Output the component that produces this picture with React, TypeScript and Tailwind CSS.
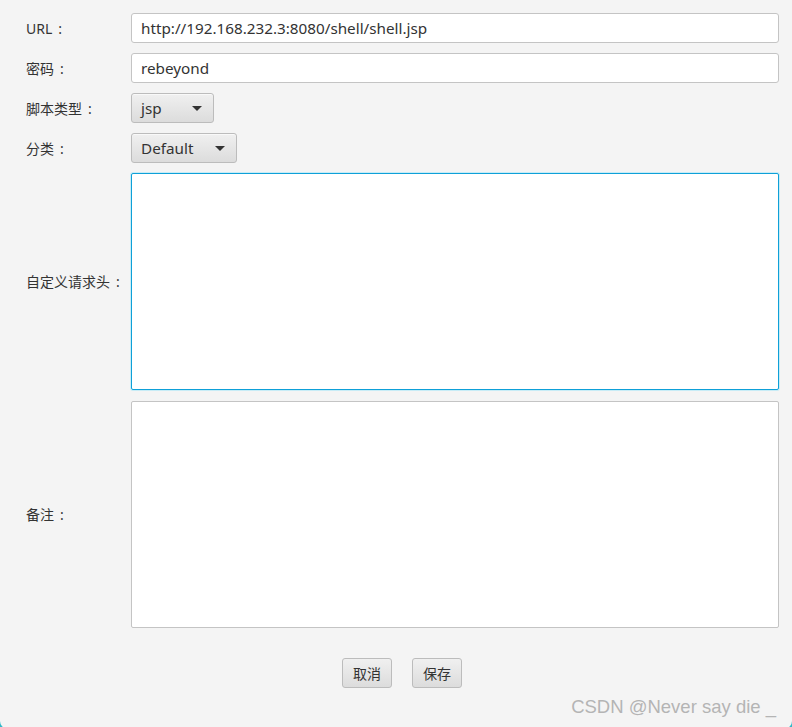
import React from "react";

const font = { fontFamily: '"Microsoft YaHei", "Noto Sans", "Noto Sans CJK SC", sans-serif' };

function Arrow() {
  return (
    <svg width="10" height="5" viewBox="0 0 10 5" className="shrink-0">
      <path d="M0 0 L10 0 L5 5 Z" fill="#333333" />
    </svg>
  );
}

function Combo({ label, width }: { label: string; width: string }) {
  return (
    <div
      className={`flex h-[30px] ${width} items-center justify-between rounded-[3px] border border-[#bcbcbc] bg-gradient-to-b from-[#f0f0f0] to-[#dcdcdc] pl-[9px] pr-[11px] text-[15.25px] text-[#333333] shadow-[0_1px_0_rgba(255,255,255,0.6)_inset]`}
    >
      <span>{label}</span>
      <Arrow />
    </div>
  );
}

function Label({ text }: { text: string }) {
  return (
    <div className="flex items-center text-[14px] text-[#333333]">
      <span>{text}</span>
      <span className="ml-[6px]">:</span>
    </div>
  );
}

export default function App() {
  return (
    <div className="relative h-[727px] w-[792px] overflow-hidden bg-[#f4f4f4]" style={font}>
      <div className="grid grid-cols-[105px_1fr] gap-y-[10px] pl-[26px] pr-[13px] pt-[13px]">
        <Label text="URL" />
        <div className="flex h-[30px] items-center rounded-[3px] border border-[#c4c4c4] bg-white px-[9px] text-[15.25px] text-[#333333]">
          http://192.168.232.3:8080/shell/shell.jsp
        </div>

        <Label text="密码" />
        <div className="flex h-[30px] items-center rounded-[3px] border border-[#c4c4c4] bg-white px-[9px] text-[15.25px] text-[#333333]">
          rebeyond
        </div>

        <Label text="脚本类型" />
        <div>
          <Combo label="jsp" width="w-[83px]" />
        </div>

        <Label text="分类" />
        <div>
          <Combo label="Default" width="w-[106px]" />
        </div>

        <Label text="自定义请求头" />
        <div className="h-[217px] rounded-[2px] border-[1.5px] border-[#0ea0d8] bg-white shadow-[0_0_0_1px_#c8ecf6]" />

        <Label text="备注" />
        <div className="mt-[1px] h-[227px] rounded-[2px] border border-[#c4c4c4] bg-white" />
      </div>

      <div className="mt-[30px] flex justify-center gap-[20px] pl-[12px]">
        <button className="flex h-[30px] w-[50px] items-center justify-center rounded-[3px] border border-[#bcbcbc] bg-gradient-to-b from-[#f0f0f0] to-[#dcdcdc] text-[14px] text-[#333333]">
          取消
        </button>
        <button className="flex h-[30px] w-[50px] items-center justify-center rounded-[3px] border border-[#bcbcbc] bg-gradient-to-b from-[#f0f0f0] to-[#dcdcdc] text-[14px] text-[#333333]">
          保存
        </button>
      </div>

      <div
        className="mt-[5px] pr-[16px] text-right text-[18.5px] leading-[28px] text-[#b4b4b4]"
        style={{ fontFamily: '"Liberation Sans", Arial, sans-serif' }}
      >
        CSDN @Never say die _
      </div>

      <div className="absolute -bottom-[4px] -left-[2px] h-[12px] w-[12px] rounded-bl-[10px] border-b-[2px] border-l-[2px] border-[#2fb8c8]" />
      <div className="absolute -bottom-[4px] -right-[2px] h-[12px] w-[12px] rounded-br-[10px] border-b-[2px] border-r-[2px] border-[#2fb8c8]" />
    </div>
  );
}
